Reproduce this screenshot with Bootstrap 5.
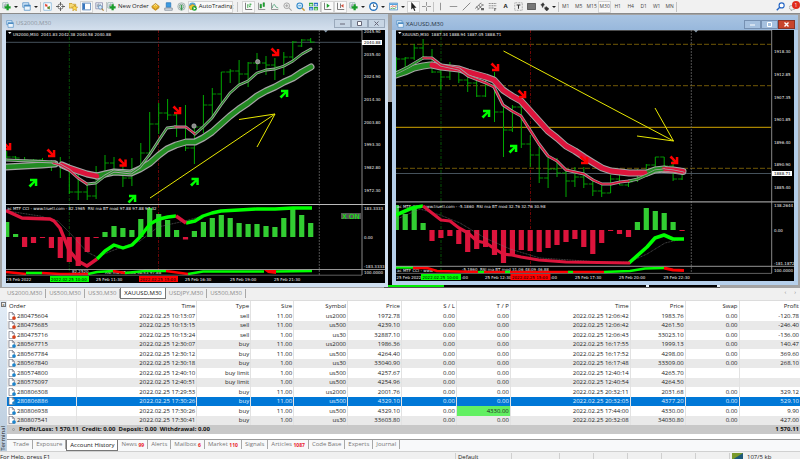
<!DOCTYPE html>
<html lang="en">
<head>
<meta charset="utf-8">
<meta name="viewport" content="width=device-width, initial-scale=1">
<title>Trading terminal</title>
<link rel="stylesheet" href="https://cdn.jsdelivr.net/npm/bootstrap@5.3.0/dist/css/bootstrap.min.css">
<style>
  body { font: 6px/9px "Open Sans", "Noto Sans", sans-serif; background: #f0f0f0; color: #222; }
  button { border: 0; background: none; padding: 0; color: inherit; font: inherit; }
  a { color: inherit; text-decoration: none; }

  /* toolbar */
  .toolstrip { height: 14px; border-bottom: 1px solid #8b8b8b; background: #f1f1f1; }
  .tool { width: 13px; height: 12px; display: inline-flex; align-items: center; justify-content: center; flex: none; }
  .tool svg { width: 9px; height: 9px; flex: none; }
  .tool-drop { width: 20px; gap: 3px; }
  .tool-drop::after { content: ""; border: 2px solid transparent; border-top-color: #222; border-bottom: 0; }
  .tool-text { width: auto; gap: 2px; padding: 0; white-space: nowrap; }
  .tool.on { background: #fafafa; outline: 1px solid #d5d5d5; outline-offset: -1px; }
  .tf { color: #444; font-size: 5px; }
  .rule { width: 1px; height: 10px; background: #c4c4c4; flex: none; }
  .count-dot { position: absolute; top: 0; right: 0; width: 8px; height: 8px; border-radius: 50%; background: #e02a1c; color: #fff; font-size: 5px; line-height: 8px; text-align: center; }

  /* chart desktop */
  .desk { background: #a3a3a3; display: grid; grid-template-columns: 386fr 406fr; column-gap: 4px; padding: 0 2px 1px; align-items: start; }
  .back-win { left: 48%; right: 10%; top: 88px; bottom: 0; background: #000; border-bottom: 1px solid #555; }
  .back-line { height: 2px; width: 18%; background: #0e0; bottom: 0; left: 0; }
  .back-win .grip { width: 3px; height: 3px; background: #e8f2fa; bottom: 0; }
  .grip-a { left: 78%; } .grip-b { right: 0; }
  .chart-win { padding: 0 3px 4px 4px; z-index: 1; border-radius: 2px 2px 0 0; background: #cfdff0; }
  .chart-win.active { margin-top: 1px; padding-right: 4px; background: #b5cfea; }
  .chart-win svg.plot { width: 100%; height: auto; background: #000; }
  .caption { height: 16px; color: #8d969f; font-size: 6px; background: linear-gradient(#b9cadc, #d3dfed); margin: 0 -3px 0 -4px; padding: 3px 3px 0 4px; }
  .active .caption { height: 15px; color: #26323f; background: linear-gradient(#a9c4e2, #98b8dc); margin-right: -4px; }
  .caption svg { width: 8px; height: 8px; }
  .caption .me-1 { margin-right: 2px !important; }
  .wbtn { width: 17px; height: 9px; border: 1px solid #9aa9bb; background: #c7d5e4; display: inline-flex; align-items: center; justify-content: center; }
  .active .wbtn { border-color: #7690b2; background: #a5c0df; }
  .active .wbtn-x { background: #c8452c; border-color: #8a3427; color: #fff; }
  .wbtn svg { width: 7px; height: 5px; }
  .plot text { font: 4px "DejaVu Sans", sans-serif; fill: #f0f0f0; }
  .plot .dark { fill: #000; }
  .plot .flag { font: 7px "DejaVu Sans", sans-serif; fill: #00ff00; }

  /* tab strips */
  .chart-tabs { height: 13px; background: #f0f0f0; color: #8b8b8b; border-bottom: 1px solid #dcdcdc; }
  .strip-tab { padding: 0 3px; height: 9px; border-right: 1px solid #a8a8a8; white-space: nowrap; }
  .strip-tab.current { height: 11px; line-height: 10px; background: #fff; color: #111; border: 1px solid #777; border-top: 0; }
  .term-tabs { height: 12px; border-top: 1px solid #999; color: #777; padding-left: 3px; }
  .term-tabs sub { color: #e8202a; font-size: 5px; font-weight: 700; bottom: -1px; }

  /* terminal */
  .side { width: 7px; background: linear-gradient(#e3edf7, #b9cbdd); flex: none; }
  .side .name { writing-mode: vertical-rl; transform: rotate(180deg); line-height: 7px; }
  .closer { width: 5px; height: 5px; line-height: 4px; font-size: 5px; margin: 1px; border: 1px solid #777; background: #f4f4f4; display: flex; align-items: center; justify-content: center; }
  .deals { table-layout: fixed; width: 100%; border-collapse: collapse; background: #fff; color: #222; }
  .deals th, .deals td { padding: 0 1px; height: 9px; line-height: 9px; text-align: right; font-weight: 400; border-right: 1px solid #e2e2e2; white-space: nowrap; overflow: hidden; }
  .deals th:last-child, .deals td:last-child { border-right: 0; }
  .deals thead th { height: 10px; line-height: 10px; }
  .deals th:first-child { text-align: left; padding-left: 2px; }
  .deals tbody tr:nth-child(odd) > * { height: 10px; }
  .deals tbody tr:nth-child(even) { background: #e9e9e9; }
  .deals tbody tr.picked { background: #0078d7; color: #e6f3fd; }
  .deals td.hit { background: #62f062; color: #222; }
  .deals svg { width: 8px; height: 8px; vertical-align: top; margin-right: 1px; margin-left: -1px; }
  .w-a { width: 8.83%; } .w-b { width: 15.13%; } .w-c { width: 6.81%; } .w-d { width: 5.42%; } .w-e { width: 6.94%; } .w-f { width: 7.69%; }
  .totals { height: 9px; background: #c8c8c8; font-weight: 700; color: #111; padding: 0 1px 0 5px; margin-bottom: 5px; }
  .totals i { width: 3px; height: 3px; border: 1px solid #999; border-radius: 50%; }
  .foot { height: 16px; border-top: 1px solid #d0d0d0; background: #f0f0f0; line-height: 9px; padding-top: 1px; }
  .foot span { border-right: 1px solid #cfcfcf; height: 12px; }
  .f-help { flex: 0 0 57%; } .f-set { flex: 0 0 7%; padding-left: 2px; } .f-gap { flex: 0 0 4.25%; } .f-wide { flex: 0 0 6%; } .f-net { flex: 1 1 auto; padding-left: 2px; }
  .f-net svg { width: 11px; height: 8px; }
</style>
</head>
<body class="vh-100 d-flex flex-column overflow-hidden">

<svg class="d-none">
  <symbol id="i-new" viewBox="0 0 12 12"><path d="M1 1h7v7H1z" fill="#fff" stroke="#8aa"/><path d="M3 7V3M5 6V2" stroke="#678"/><path d="M7.500 3v8M3.500 7h8" stroke="#189c28" stroke-width="3"/></symbol>
  <symbol id="i-stack" viewBox="0 0 12 12"><path d="M1 1h8v6H1z" fill="#d8ebfa" stroke="#4d8cc4"/><path d="M3 4h8v7H3z" fill="#eef6fc" stroke="#4d8cc4"/><path d="M3 5h8" stroke="#4d8cc4" stroke-width="2"/></symbol>
  <symbol id="i-watch" viewBox="0 0 12 12"><path d="M1 1h10v10H1z" fill="#fff" stroke="#7ab0d8"/><path d="M3 2v4h4z" fill="#e33b25"/><path d="M9 10V5L5 8z" fill="#22a32c"/><path d="M3 4h3M6 8h3" stroke="#e33b25"/></symbol>
  <symbol id="i-target" viewBox="0 0 12 12"><circle cx="6" cy="6" r="3.500" fill="#fff" stroke="#555"/><path d="M6 0v5M6 7v5M0 6h5M7 6h5" stroke="#555" stroke-width="1.200"/></symbol>
  <symbol id="i-fav" viewBox="0 0 12 12"><path d="M0 2h4l1 1h4v5H0z" fill="#f5d978" stroke="#c49a27"/><path d="M7.500 4l1.200 2.600 2.800.3-2.100 1.900.6 2.900-2.500-1.500L5 11.700l.6-2.900-2.100-1.900 2.800-.3z" fill="#ffdd55" stroke="#c08c14" stroke-width=".8"/></symbol>
  <symbol id="i-panel" viewBox="0 0 12 12"><path d="M.5 1.500h11v9H.5z" fill="#fff" stroke="#3a6fae"/><path d="M1 2h3v8H1z" fill="#3a78c0"/></symbol>
  <symbol id="i-tester" viewBox="0 0 12 12"><path d="M1 1h9v8H1z" fill="#eef4fa" stroke="#88a"/><path d="M3 7V3M5 6V2M7 5V3" stroke="#678"/><circle cx="7" cy="7" r="2.500" fill="#d4e8f8" stroke="#5a86b4"/><path d="M9 9l2.500 2.500" stroke="#b08840" stroke-width="1.600"/></symbol>
  <symbol id="i-book" viewBox="0 0 12 12"><path d="M1 6l5-4 5 4-5 4z" fill="#f0bc30" stroke="#a87410"/><path d="M1 6v2l5 3.500L11 8V6l-5 4z" fill="#c98f18"/><path d="M4 5l2-1.500L8 5" stroke="#fff3b0" fill="none"/></symbol>
  <symbol id="i-vps" viewBox="0 0 12 12"><path d="M3 1h6v6H3z" fill="#3e9be0" stroke="#2a75b8"/><path d="M1 8h10v3H1z" fill="#d9dee4" stroke="#7b8794"/></symbol>
  <symbol id="i-signal" viewBox="0 0 12 12"><circle cx="6" cy="6" r="5" fill="#dfe6e4" stroke="#9aa"/><circle cx="6" cy="6" r="3" fill="none" stroke="#7a9a88"/><path d="M6 4v7" stroke="#3a9a50" stroke-width="2" fill="none"/></symbol>
  <symbol id="i-auto" viewBox="0 0 12 12"><circle cx="6" cy="5" r="4.500" fill="#5aa8d8"/><path d="M1 6l5-3 5 3-4 4H3z" fill="#f3c634" stroke="#a47c14" stroke-width=".7"/><circle cx="8.500" cy="8.500" r="3.300" fill="#18a02a"/><path d="M7.500 6.800v3.400l3-1.700z" fill="#fff"/></symbol>
  <symbol id="i-bars" viewBox="0 0 12 12"><path d="M2 1v9h9" stroke="#555" fill="none"/><path d="M5 3v5M8 2v5M5 4h1M7 6h1M8 3h2" stroke="#1b9b2c"/></symbol>
  <symbol id="i-candle" viewBox="0 0 12 12"><path d="M2 1v9h9" stroke="#777" fill="none"/><path d="M4 3h2v5H4zM8 1h2v5H8z" fill="#1fae34" stroke="#137a20" stroke-width=".6"/></symbol>
  <symbol id="i-line" viewBox="0 0 12 12"><path d="M2 1v9h9" stroke="#777" fill="none"/><path d="M3 8c1-5 3-6 4-3s3 2 4 3" stroke="#3a9a6a" fill="none"/></symbol>
  <symbol id="i-zin" viewBox="0 0 12 12"><circle cx="5" cy="5" r="3.800" fill="#eee" stroke="#a5a5a5" stroke-width="1.300"/><path d="M3 5h4M5 3v4M8 8l3.500 3.500" stroke="#a5a5a5" stroke-width="1.400"/></symbol>
  <symbol id="i-zout" viewBox="0 0 12 12"><circle cx="5" cy="5" r="3.800" fill="#d9effc" stroke="#2f86c8" stroke-width="1.400"/><path d="M3 5h4" stroke="#2f86c8"/><path d="M8 8l3.500 3.500" stroke="#c79a3a" stroke-width="2"/></symbol>
  <symbol id="i-tile" viewBox="0 0 12 12"><path d="M0 1h5.500v4.500H0zM6.500 6.500H12V11H6.500z" fill="#2faa3c"/><path d="M6.500 1H12v4.500H6.500zM0 6.500h5.500V11H0z" fill="#2b72c8"/><path d="M1 3h3.500v1.500H1zM7.500 3H11v1.500H7.500zM1 8.500h3.500V10H1zM7.500 8.500H11V10H7.500z" fill="#fff"/></symbol>
  <symbol id="i-shift" viewBox="0 0 12 12"><path d="M2 1v9h9" stroke="#555" fill="none"/><path d="M5 2v6l4-3z" fill="#1fa32f"/></symbol>
  <symbol id="i-scroll" viewBox="0 0 12 12"><path d="M2 1v9h9M6 2v6" stroke="#555" fill="none"/><path d="M10 2.500v5L6.500 5z" fill="#d4503a"/></symbol>
  <symbol id="i-clock" viewBox="0 0 12 12"><circle cx="6" cy="6" r="5" fill="#fff" stroke="#2a76c0" stroke-width="1.800"/><path d="M6 3v3h2.500" stroke="#333" fill="none"/></symbol>
  <symbol id="i-tmpl" viewBox="0 0 12 12"><path d="M.5 1.500h11v9H.5z" fill="#fff" stroke="#3d84c4"/><path d="M1 3h10" stroke="#5aa2dc" stroke-width="2"/><path d="M2 7l2-2 3 1 3-1" stroke="#d4503a" fill="none"/><path d="M2 9l3-1 2 1 3-2" stroke="#2a9a3a" fill="none"/></symbol>
  <symbol id="i-ptr" viewBox="0 0 12 12"><path d="M3 0v10l2.300-2L7 12l1.500-.7L7 7.500h3z" fill="#222"/></symbol>
  <symbol id="i-cross" viewBox="0 0 12 12"><path d="M6 0v5M6 7v5M0 6h5M7 6h5" stroke="#777"/></symbol>
  <symbol id="i-v" viewBox="0 0 12 12"><path d="M6 1v10" stroke="#777"/></symbol>
  <symbol id="i-h" viewBox="0 0 12 12"><path d="M1 6h10" stroke="#777"/></symbol>
  <symbol id="i-d" viewBox="0 0 12 12"><path d="M1 11L11 1" stroke="#666"/></symbol>
  <symbol id="i-chan" viewBox="0 0 12 12"><path d="M0 9l8-8M3 11l8-8M2 6l3 4M5 4l3 4M8 2l3 3" stroke="#555"/><path d="M8 8h4v3H8z" fill="#666"/></symbol>
  <symbol id="i-fibo" viewBox="0 0 12 12"><path d="M1 2h10M1 5h10M1 8h7" stroke="#666" stroke-dasharray="1.500 .7"/><path d="M9 8v4M9 9h2" stroke="#444"/></symbol>
  <symbol id="i-tbox" viewBox="0 0 12 12"><path d="M1 1h10v10H1z" fill="none" stroke="#777" stroke-dasharray="1 1"/><path d="M3.500 4h5M6 4v5" stroke="#333" stroke-width="1.400"/></symbol>
  <symbol id="i-rect" viewBox="0 0 12 12"><path d="M.5 2h11v8H.5z" fill="#777" stroke="#444"/></symbol>
  <symbol id="i-arrs" viewBox="0 0 12 12"><path d="M1 4l3-3 2 3-2 1v2H3V5zM6 9l2-3 4 3-3 3zM5 6l2 2" fill="#333" stroke="#333" stroke-width=".6"/></symbol>
  <symbol id="i-find" viewBox="0 0 12 12"><circle cx="7.500" cy="4.500" r="3.400" fill="#fff" stroke="#2465c4" stroke-width="1.500"/><path d="M5 7l-4 4" stroke="#2465c4" stroke-width="2"/></symbol>
  <symbol id="i-chat" viewBox="0 0 12 12"><path d="M0 7c0-3 9-3 9 0s-3 3-4 3l-2 2v-2C1 9.500 0 8.500 0 7z" fill="#eee" stroke="#999"/></symbol>
  <symbol id="i-sell" viewBox="0 0 12 12"><path d="M1.500.5h5l3 3v8h-8z" fill="#fff" stroke="#667"/><path d="M6.500.5v3h3" fill="none" stroke="#667"/><circle cx="9" cy="9" r="2.800" fill="#d8401c"/></symbol>
  <symbol id="i-buy" viewBox="0 0 12 12"><path d="M1.500.5h5l3 3v8h-8z" fill="#fff" stroke="#667"/><path d="M6.500.5v3h3" fill="none" stroke="#667"/><circle cx="9" cy="9" r="2.800" fill="#1d84cc"/></symbol>
</svg>

<nav class="toolstrip d-flex align-items-center flex-shrink-0 position-relative" aria-label="Tools">
  <button class="tool tool-drop" aria-label="New chart"><svg><use href="#i-new"/></svg></button>
  <button class="tool tool-drop" aria-label="Profiles"><svg><use href="#i-stack"/></svg></button>
  <span class="rule"></span>
  <button class="tool" aria-label="Market watch"><svg><use href="#i-watch"/></svg></button>
  <button class="tool" aria-label="Data window"><svg><use href="#i-target"/></svg></button>
  <button class="tool" aria-label="Navigator"><svg><use href="#i-fav"/></svg></button>
  <button class="tool on" aria-label="Terminal"><svg><use href="#i-panel"/></svg></button>
  <button class="tool" aria-label="Strategy tester"><svg><use href="#i-tester"/></svg></button>
  <span class="rule"></span>
  <button class="tool tool-text"><svg><use href="#i-new"/></svg>New Order</button>
  <button class="tool" aria-label="MetaEditor"><svg><use href="#i-book"/></svg></button>
  <button class="tool" aria-label="Virtual hosting"><svg><use href="#i-vps"/></svg></button>
  <button class="tool" aria-label="Signals"><svg><use href="#i-signal"/></svg></button>
  <button class="tool tool-text on"><svg><use href="#i-auto"/></svg>AutoTrading</button>
  <span class="rule mx-1"></span>
  <button class="tool on" aria-label="Bar chart"><svg><use href="#i-bars"/></svg></button>
  <button class="tool" aria-label="Candlesticks"><svg><use href="#i-candle"/></svg></button>
  <button class="tool" aria-label="Line chart"><svg><use href="#i-line"/></svg></button>
  <button class="tool" aria-label="Zoom in"><svg><use href="#i-zin"/></svg></button>
  <button class="tool" aria-label="Zoom out"><svg><use href="#i-zout"/></svg></button>
  <button class="tool" aria-label="Tile windows"><svg><use href="#i-tile"/></svg></button>
  <span class="rule"></span>
  <button class="tool on" aria-label="Auto scroll"><svg><use href="#i-shift"/></svg></button>
  <button class="tool on" aria-label="Chart shift"><svg><use href="#i-scroll"/></svg></button>
  <button class="tool tool-drop" aria-label="Indicators"><svg><use href="#i-new"/></svg></button>
  <button class="tool tool-drop" aria-label="Periods"><svg><use href="#i-clock"/></svg></button>
  <button class="tool tool-drop" aria-label="Templates"><svg><use href="#i-tmpl"/></svg></button>
  <button class="tool on" aria-label="Cursor"><svg><use href="#i-ptr"/></svg></button>
  <button class="tool" aria-label="Crosshair"><svg><use href="#i-cross"/></svg></button>
  <span class="rule"></span>
  <button class="tool" aria-label="Vertical line"><svg><use href="#i-v"/></svg></button>
  <button class="tool" aria-label="Horizontal line"><svg><use href="#i-h"/></svg></button>
  <button class="tool" aria-label="Trendline"><svg><use href="#i-d"/></svg></button>
  <button class="tool" aria-label="Channel"><svg><use href="#i-chan"/></svg></button>
  <button class="tool" aria-label="Fibonacci"><svg><use href="#i-fibo"/></svg></button>
  <button class="tool fw-bold" aria-label="Text">A</button>
  <button class="tool" aria-label="Text label"><svg><use href="#i-tbox"/></svg></button>
  <button class="tool" aria-label="Rectangle"><svg><use href="#i-rect"/></svg></button>
  <button class="tool tool-drop" aria-label="Arrows"><svg><use href="#i-arrs"/></svg></button>
  <span class="rule"></span>
  <button class="tool tf">M1</button><button class="tool tf">M5</button><button class="tool tf">M15</button><button class="tool tf on">M30</button><button class="tool tf">H1</button><button class="tool tf">H4</button><button class="tool tf">D1</button><button class="tool tf">W1</button><button class="tool tf">MN</button>
  <span class="rule"></span>
  <button class="tool ms-auto" aria-label="Search"><svg><use href="#i-find"/></svg></button>
  <button class="tool position-relative" aria-label="Notifications"><svg><use href="#i-chat"/></svg><span class="count-dot">1</span></button>
</nav>

<main class="desk position-relative flex-shrink-0">
  <div class="back-win position-absolute"><div class="back-line position-absolute"></div><div class="grip grip-a position-absolute"></div><div class="grip grip-b position-absolute"></div></div>

  <section class="chart-win position-relative">
    <header class="caption d-flex align-items-center">
      <svg class="me-1"><use href="#i-stack"/></svg><span class="me-auto">US2000,M30</span>
      <button class="wbtn" aria-label="Minimize"><svg viewBox="0 0 7 5"><path d="M1 3h5" stroke="#667"/></svg></button>
      <button class="wbtn" aria-label="Maximize"><svg viewBox="0 0 7 5"><path d="M1.500.5h4v4h-4z" fill="#fff" stroke="#667"/></svg></button>
      <button class="wbtn" aria-label="Close"><svg viewBox="0 0 7 5"><path d="M1.500.5l4 4M5.500.5l-4 4" stroke="#667"/></svg></button>
    </header>
    <svg class="plot d-block" id="plotLeft" viewBox="6 30 379 253" role="img" aria-label="US2000 M30 chart"></svg>
  </section>

  <section class="chart-win active position-relative">
    <header class="caption d-flex align-items-center">
      <svg class="me-1"><use href="#i-stack"/></svg><span class="me-auto">XAUUSD,M30</span>
      <button class="wbtn" aria-label="Minimize"><svg viewBox="0 0 7 5"><path d="M1 3h5" stroke="#fff"/></svg></button>
      <button class="wbtn" aria-label="Maximize"><svg viewBox="0 0 7 5"><path d="M1.500.5h4v4h-4z" fill="none" stroke="#fff"/></svg></button>
      <button class="wbtn wbtn-x" aria-label="Close"><svg viewBox="0 0 7 5"><path d="M1.500.5l4 4M5.500.5l-4 4" stroke="#fff" stroke-width="1.400"/></svg></button>
    </header>
    <svg class="plot d-block" id="plotRight" viewBox="396 30 398 251" role="img" aria-label="XAUUSD M30 chart"></svg>
  </section>
</main>

<nav class="chart-tabs d-flex align-items-start flex-shrink-0" aria-label="Open charts">
  <div class="d-flex align-items-center ps-1">
    <a href="#" class="strip-tab">US2000,M30</a><a href="#" class="strip-tab">US500,M30</a><a href="#" class="strip-tab">US30,M30</a><a href="#" class="strip-tab current" aria-current="page">XAUUSD,M30</a><a href="#" class="strip-tab">USDJPY,M30</a><a href="#" class="strip-tab">US500,M30</a>
  </div>
  <div class="ms-auto d-flex gap-2 pe-1"><button aria-label="Scroll left">‹</button><button aria-label="Scroll right">›</button></div>
</nav>

<section class="d-flex flex-shrink-0">
  <aside class="side d-flex flex-column justify-content-between align-items-center">
    <button class="closer" aria-label="Close terminal">×</button>
    <span class="name">Terminal</span>
  </aside>
  <div class="flex-grow-1 bg-white">
    <table class="deals">
      <colgroup><col class="w-a"><col class="w-b"><col class="w-c"><col class="w-d"><col class="w-c"><col class="w-c"><col class="w-e"><col class="w-c"><col class="w-b"><col class="w-e"><col class="w-c"><col class="w-f"></colgroup>
      <thead><tr><th>Order</th><th>Time</th><th>Type</th><th>Size</th><th>Symbol</th><th>Price</th><th>S / L</th><th>T / P</th><th>Time</th><th>Price</th><th>Swap</th><th>Profit</th></tr></thead>
      <tbody id="rows"></tbody>
    </table>
    <div class="totals d-flex align-items-center"><i class="me-1"></i><span class="me-auto">Profit/Loss: 1 570.11&nbsp; Credit: 0.00&nbsp; Deposit: 0.00&nbsp; Withdrawal: 0.00</span><span>1 570.11</span></div>
    <nav class="term-tabs d-flex align-items-start bg-body-tertiary" aria-label="Terminal pages">
      <a href="#" class="strip-tab">Trade</a><a href="#" class="strip-tab">Exposure</a><a href="#" class="strip-tab current" aria-current="page">Account History</a><a href="#" class="strip-tab">News <sub>99</sub></a><a href="#" class="strip-tab">Alerts</a><a href="#" class="strip-tab">Mailbox <sub>6</sub></a><a href="#" class="strip-tab">Market <sub>110</sub></a><a href="#" class="strip-tab">Signals</a><a href="#" class="strip-tab">Articles <sub>1087</sub></a><a href="#" class="strip-tab">Code Base</a><a href="#" class="strip-tab">Experts</a><a href="#" class="strip-tab">Journal</a>
    </nav>
  </div>
</section>

<footer class="foot d-flex flex-shrink-0">
  <span class="f-help">For Help, press F1</span><span class="f-set">Default</span><span class="f-wide"></span><span class="f-gap"></span><span class="f-gap"></span><span class="f-gap"></span><span class="f-gap"></span><span class="f-gap"></span>
  <div class="f-net d-flex"><svg viewBox="0 0 11 8" class="me-1"><path d="M0 0h11v8H0z" fill="#1d5a7a"/><path d="M0 0h11L0 7z" fill="#7a9a2a"/></svg>107/5 kb</div>
</footer>

<script src="https://cdn.jsdelivr.net/npm/bootstrap@5.3.0/dist/js/bootstrap.bundle.min.js"></script>
<script>
// Closed orders
const deals = [
  "280475604|2022.02.25 10:13:07|sell|11.00|us2000|1972.78|0.00|0.00|2022.02.25 12:06:42|1983.76|0.00|-120.78",
  "280475685|2022.02.25 10:13:15|sell|11.00|us500|4239.10|0.00|0.00|2022.02.25 12:06:42|4261.50|0.00|-246.40",
  "280475716|2022.02.25 10:13:24|sell|1.00|us30|32887.10|0.00|0.00|2022.02.25 12:06:43|33023.10|0.00|-136.00",
  "280567715|2022.02.25 12:30:07|buy|11.00|us2000|1986.36|0.00|0.00|2022.02.25 16:17:55|1999.13|0.00|140.47",
  "280567784|2022.02.25 12:30:12|buy|11.00|us500|4264.40|0.00|0.00|2022.02.25 16:17:52|4298.00|0.00|369.60",
  "280567840|2022.02.25 12:30:18|buy|1.00|us30|33040.90|0.00|0.00|2022.02.25 16:17:48|33309.00|0.00|268.10",
  "280574800|2022.02.25 12:40:10|buy limit|1.00|us500|4257.67|0.00|0.00|2022.02.25 12:40:14|4265.70||",
  "280575097|2022.02.25 12:40:51|buy limit|1.00|us500|4254.96|0.00|0.00|2022.02.25 12:40:54|4264.50||",
  "280806308|2022.02.25 17:29:53|buy|11.00|us2000|2001.76|0.00|0.00|2022.02.25 20:32:11|2031.68|0.00|329.12",
  "280806886|2022.02.25 17:30:26|buy|11.00|us500|4329.10|0.00|0.00|2022.02.25 20:32:05|4377.20|0.00|529.10",
  "280806938|2022.02.25 17:30:26|buy|11.00|us500|4329.10|0.00|4330.00|2022.02.25 17:44:00|4330.00|0.00|9.90",
  "280807541|2022.02.25 17:30:41|buy|1.00|us30|33603.80|0.00|0.00|2022.02.25 20:32:08|34030.80|0.00|427.00"
];
document.getElementById("rows").innerHTML = deals.map((line, i) => {
  const c = line.split("|");
  const icon = c[2] === "sell" ? "i-sell" : "i-buy";
  return `<tr class="${i === 9 ? "picked" : ""}"><th scope="row"><svg><use href="#${icon}"/></svg>${c[0]}</th>` +
    c.slice(1).map((v, k) => `<td${k === 6 && v !== "0.00" ? ' class="hit"' : ""}>${v}</td>`).join("") + "</tr>";
}).join("");

// Chart drawing helpers
const R = "#dc143c", G = "#228b22", LG = "#00ff00", RR = "#ff0000";
const seg = (x1, y1, x2, y2, s, extra = "") => `<path d="M${x1} ${y1}L${x2} ${y2}" stroke="${s}" ${extra}/>`;
const line = (pts, s, w, extra = "") => `<polyline points="${pts}" fill="none" stroke="${s}" stroke-width="${w}" stroke-linejoin="round" ${extra}/>`;
const label = (x, y, t, cls = "") => `<text x="${x}" y="${y}" class="${cls}" xml:space="preserve">${t}</text>`;
const box = (x, y, w, h, f) => `<rect x="${x}" y="${y}" width="${w}" height="${h}" fill="${f}"/>`;
// bars: [high, low, open, close]
const ohlc = (x0, step, bars) => bars.map((b, i) => {
  const x = (x0 + step * i).toFixed(1);
  return seg(x, b[0], x, b[1], "#00a800") + (b[2] ? `<path d="M${x} ${b[2]}h-4" stroke="#00b400" stroke-width=".8"/>` : "") + (b[3] ? `<path d="M${x} ${b[3]}h4" stroke="#00b400" stroke-width=".8"/>` : "");
}).join("");
const hist = (x0, step, zero, tops) => tops.map((t, i) => box((x0 + step * i - 2.6).toFixed(1), Math.min(t, zero), 5.2, Math.max(Math.abs(t - zero), 1), t < zero ? "#32cd32" : R)).join("");
const ribbon = (parts, outer, inner) =>
  parts.map(p => line(p[1], "#a5a5a5", outer, 'stroke-linecap="round"')).join("") + parts.map(p => line(p[1], p[0], inner, 'stroke-linecap="round"')).join("");
const arrow = (x, y, up) => `<path transform="translate(${x} ${y})${up ? "" : " rotate(90)"}" d="M-4.500 2.500L.3-1.800H-3V-4.300H4.300V3H1.800V-.2L-2.500 4.500Z" fill="${up ? LG : RR}"/>`;
const dash = 'stroke-dasharray="3 1.500 1 1.500" stroke-width=".8"';

document.getElementById("plotLeft").innerHTML =
  seg(6, 42.3, 362, 42.3, "#45525c") + seg(69.3, 30, 69.3, 275, "#086808", dash) + seg(158.5, 30, 158.5, 275, "#8a0808", dash) +
  seg(319.3, 30, 319.3, 275, "#666", 'stroke-dasharray="2 1" stroke-width=".8"') +
  ohlc(6.7, 8.94, [[151,160,0,157],[156,161,157,158],[157,162,0,160],[159,162,160,160],[158,162,160,161],[160,171,0,0],[157,178,0,0],[167,194,0,192],[173,200,192,192],[183,200,192,196],[166,199,196,0],[155,172,0,163],[157,173,163,0],[165,187,0,178],[158,186,178,0],[143,167,0,153],[112,157,153,124],[103,134,124,113],[99,120,113,115],[112,137,115,0],[105,151,0,148],[126,164,148,127],[95,133,127,105],[88,117,105,94],[72,105,94,72],[69,83,72,71],[60,85,71,74],[62,87,74,63],[53,70,63,63],[56,75,63,65],[58,80,65,67],[52,75,67,57],[41,60,57,42],[39,47,46,40],[38,43,40,42]]) +
  ribbon([[G,"6,167 24,166 42,165 55,164"],[G,"97,176 105,174 114,172 131,173 140,169 150,163 159,155 167,149 176,145 186,142 195,142 203,138 212,132 221,124 230,116 239,109 248,103 257,96 266,91 275,87 284,82 293,78 302,72 311,67"],[R,"62,165 69,168 78,171 87,174 97,176"]], 7, 4.6) +
  ribbon([[G,"6,160 30,161 55,162"],[G,"87,184 96,183 105,176 114,171 131,173 140,167 150,154 159,140 167,128 175,127"],[G,"195,134 203,127 212,118 221,105 230,93 239,85 248,81 257,73 266,70 275,69 284,66 293,61 302,54 311,49"],[R,"53,163 60,165 69,170 78,178 87,184"],[R,"175,127 186,127 195,134"]], 2.8, 1.2) +
  arrow(7, 146) + arrow(51, 153) + arrow(122.500, 162.500) + arrow(177, 110) + arrow(275, 52) +
  arrow(33, 183, 1) + arrow(132, 199, 1) + arrow(194.500, 182, 1) + arrow(284, 94, 1) +
  line("150,198 275,114", "#e8e800", 1) + line("239,119.500 275,114 257,147", "#e8e800", 1) +
  '<circle cx="194" cy="126" r="2.200" fill="#888" stroke="#bbb" stroke-width=".6"/><circle cx="257.700" cy="61.700" r="2.200" fill="#888" stroke="#bbb" stroke-width=".6"/>' +
  '<path d="M323.500 30h4.500l-2.200 2.500z" fill="#8aa0b4"/><path d="M8 32h3.500l-1.700 2z" fill="#fff"/>' + label(13, 35.500, "US2000,M30  2041.83 2042.38 2040.58 2040.88") +
  hist(6.7, 8.94, 237, [222,234,247,243,238,248,258,262,266,252,238,232,226,228,230,219,208,214,220,230,239.5,231,222,218,215,218,223,224,224,226,227,218,209,215,223]) +
  line("7,211 40,216 58,221 70,233 87,252 97,257 114,250 140,241 158,227 185,221 210,214", "#777", .6, 'stroke-dasharray="1 .6"') +
  label(7, 210, "ac MTF CCI - www.truetl.com - 82.1965  RSI ma BT mod 97.88 97.88 97.32") +
  line("6,210.500 22,218 35,218.500 50,219 54,221 60,228 69,250 78,261 87,266 97,259", R, 3.4) +
  line("97,259 105,251 114,245 123,248 132,245 140,237 150,224 159,219 168,217 176,216", LG, 3.4) +
  line("186,223 195,221 203,216 212,213 221,211 239,210 257,209 275,209 293,208 312,208", LG, 3.4) + line("176,216 186,223", R, 3.4) +
  label(72, 273, "82.2520") + label(105, 274, "RSI ma BT mod 98.53 97.88") +
  line("6,272 26,274", RR, 2.6) + line("26,273 42,273", LG, 2.6) + line("42,273 60,274 88,274", RR, 2.6) + line("88,274 97,272 113,271", LG, 2.6) + line("113,271 125,273", RR, 2.6) + line("125,273 145,271 166,271", LG, 2.6) + line("166,271 188,274", RR, 2.6) + line("188,274 203,271.500 264,271.500", LG, 2.6) + line("276,271.500 312,271", LG, 2.6) + '<path d="M264 270h12v4l-8-1z" fill="red"/>' +
  box(341, 213, 20, 6, "#555") + label(342, 218.500, "X ON", "flag") +
  seg(6, 30, 362, 30, "#999") + seg(6, 204.5, 385, 204.5, "#bbb") + seg(6, 269.500, 385, 269.500, "#bbb", 'stroke-width=".8"') + seg(6, 275.200, 362, 275.200, "#888", 'stroke-width=".7"') + seg(362, 30, 362, 275, "#aaa", 'stroke-width=".8"') +
  [["2045.90",33],["2035.40",55.5],["2024.90",78],["2014.30",101],["2003.80",123.5],["1993.30",146],["1982.80",169],["1972.30",191.5],["183.3333",209.5],["0.00",238.5],["-183.3333",267.5],["100.0000",274]].map(a => label(364, a[1], a[0])).join("") +
  box(362, 40, 20, 5, "#fff") + label(364, 44, "2040.88", "dark") +
  label(6.500, 280.500, "25 Feb 2022") + label(96, 280.500, "25 Feb 11:30") + label(185, 280.500, "25 Feb 16:30") + label(230, 280.500, "25 Feb 19:00") + label(274, 280.500, "25 Feb 21:30") +
  box(50, 276, 39, 6, LG) + label(51, 280.500, "2022.02.25 10:00", "dark") + box(139, 276, 39, 6, RR) + label(140, 280.500, "2022.02.25 15:00", "dark");

document.getElementById("plotRight").innerHTML =
  [44.3, 85.7, 168.3].map(y => seg(396, y, 771, y, "#7d6208", 'stroke-dasharray="5 2" stroke-width=".9"')).join("") +
  seg(396, 127.300, 771, 127.300, "#a88400", 'stroke-width="1.200"') + seg(396, 173.500, 771, 173.500, "#45525c") +
  seg(441, 30, 441, 273, "#086808", dash) + seg(530.5, 30, 530.5, 273, "#8a0808", dash) + seg(691.3, 30, 691.3, 273, "#666", 'stroke-dasharray="2 1" stroke-width=".8"') +
  ohlc(396.3, 8.93, [[57,72,0,59],[57,68,59,58],[44,60,58,48],[39,57,48,57],[49,73,58,72],[68,90,72,77],[62,80,77,70],[68,83,0,80],[73,92,80,83],[77,97,83,96],[80,97,96,85],[72,122,85,112],[105,157,112,130],[105,132,130,107],[97,148,107,144],[135,167,144,155],[147,183,155,178],[157,188,178,169],[158,177,169,173],[168,197,173,181],[167,187,181,177],[167,188,177,184],[178,196,184,191],[183,197,191,193],[175,193,193,179],[175,185,179,185],[180,187,185,182],[169,182,0,178],[164,173,173,165],[157,168,165,157],[157,167,157,166],[158,181,166,179],[173,180,179,173]]) +
  ribbon([[G,"396,75 405,72 414,68 423,66 430,65"],[G,"647,173 655,170 664,169"],[R,"432,65 441,67 450,68 459,69 468,72 486,77 494,80 503,90 512,96 521,101 530,111 539,121 548,131 557,138 566,146 575,151 584,157 592,162 602,168 611,171 629,173 645,173"],[R,"664,169.500 673,170 683,171.500"]], 7, 5) +
  ribbon([[G,"396,73 408,67 423,58"],[G,"629,181 638,179 647,175 655,171 664,170"],[R,"423,58 432,58 441,65 459,69 468,76 486,83 494,87 503,105 512,111 521,116 530,130 539,144 548,156 557,161 566,170 575,172 584,174 593,180 602,184 611,184 620,182 629,181"],[R,"664,170 673,171 683,173"]], 3, 1.5) +
  arrow(495, 67) + arrow(522, 94) + arrow(584, 160) + arrow(674, 160) + arrow(486, 114, 1) + arrow(513, 149, 1) +
  line("503.500,51 673.500,141", "#e8e800", 1) + line("637,136 673.500,141 655,108", "#e8e800", 1) +
  '<path d="M693.700 30h4.500l-2.200 2.500z" fill="#8aa0b4"/><path d="M398 32h3.500l-1.700 2z" fill="#fff"/>' + label(402, 35.500, "XAUUSD,M30  1887.34 1888.94 1887.05 1888.71") +
  hist(396.3, 8.93, 230, [205,214,208,223,241,238,236,244,252,249,247,255,263,255,250,251,252,248,245,242,239,247,254,243,231,234,237,222,208,211,213,222,231]) +
  line("397,219 420,209 440,215 460,223 485,238 510,249 540,258 600,262 629,262 647,254 665,243 682,239", "#777", .6, 'stroke-dasharray="1 .6"') +
  label(397, 208, "ac MTF CCI - www.truetl.com - -5.1860  RSI ma BT mod 32.76 32.76 30.98") +
  line("396,215 412,208 423,206", LG, 3.6) + line("629,263 647,247 655,238 664,235 673,239 684,239", LG, 3.6) +
  line("423,206 432,213 441,220 450,221 459,228 468,233 477,241 486,243 495,249 503,254 512,255 521,257 539,260 566,262 630,263", R, 3.2) +
  label(397, 272, "ac MTF CCI - www") + label(462, 270.500, "-5.1860  RSI ma BT mod 31.06 48.09 46.88") +
  line("396,267.500 413,267.500", LG, 2.4) + line("413,268 427,268 437,271 478,272", RR, 2.4) + line("484,272 505,272", RR, 2.4) + line("510,272 604,272", RR, 2.4) + line("478,272 484,272", LG, 2.4) + line("505,272 510,272", LG, 2.4) + line("568,272 573,272", LG, 2.4) + line("604,272 630,271 645,268.500 664,268", LG, 2.4) + line("664,268 673,270 684,270.500", RR, 3) +
  seg(396, 30, 772, 30, "#999") + seg(396, 201.800, 794, 201.800, "#999", 'stroke-width="1.300"') + seg(396, 266.300, 794, 266.300, "#bbb", 'stroke-width=".8"') + seg(396, 273.400, 772, 273.400, "#888", 'stroke-width=".7"') + seg(771.7, 30, 771.7, 273, "#aaa", 'stroke-width=".8"') +
  [["1918.30",53],["1912.85",75.5],["1907.35",98.5],["1901.85",121],["1896.40",143.5],["1890.90",166],["1885.40",189],["138.2644",206.5],["0.00",231.5],["-181.1872",265],["100.0000",271.5]].map(a => label(774, a[1], a[0])).join("") +
  box(772, 171, 20, 5, "#fff") + label(774, 175, "1888.71", "dark") +
  label(396.500, 278.500, "25 Feb 2022") + label(461.500, 278.500, ":00") + label(485, 278.500, "25 Feb 12:30") + label(550.500, 278.500, ":00") + label(575, 278.500, "25 Feb 17:30") + label(619, 278.500, "25 Feb 20:00") + label(663.500, 278.500, "25 Feb 22:30") +
  box(421, 274, 40, 6, LG) + label(422.500, 278.500, "2022.02.25 10:00", "dark") + box(510.500, 274, 40, 6, RR) + label(512, 278.500, "2022.02.25 15:00", "dark");
</script>
</body>
</html>
